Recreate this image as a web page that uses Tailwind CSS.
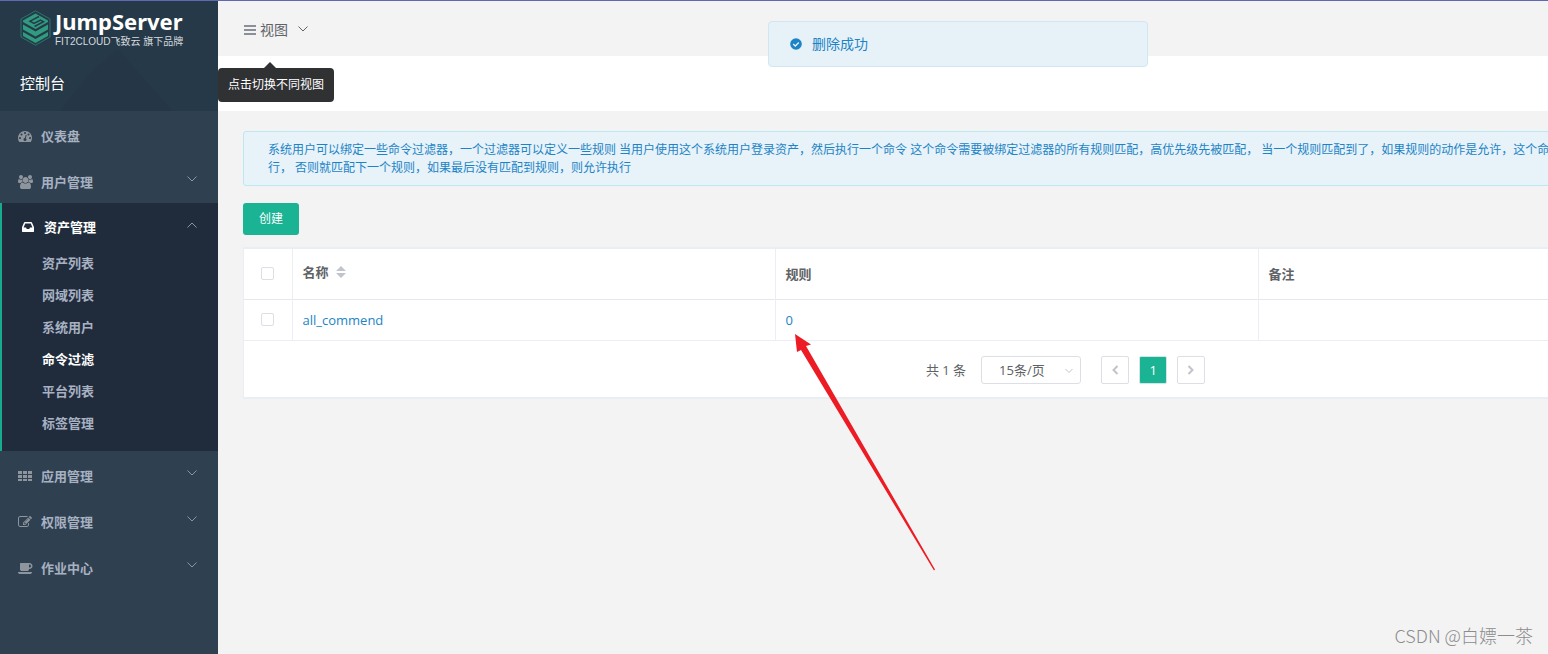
<!DOCTYPE html>
<html lang="zh-CN">
<head>
<meta charset="utf-8">
<title>JumpServer - 命令过滤</title>
<script src="https://cdn.jsdelivr.net/npm/@tailwindcss/browser@4"></script>
</head>
<body class="relative flex min-h-screen overflow-x-hidden border-t border-[#6067b3] bg-[#f3f3f4] font-['Open_Sans','Noto_Sans_CJK_SC',sans-serif] text-[13px] leading-5 text-[#606266]">

<aside class="w-[218px] shrink-0 bg-[#2f4050]">
  <header class="relative h-[110px] overflow-hidden bg-[#263949] text-white">
    <svg class="absolute inset-0 size-full" viewBox="0 0 218 110" aria-hidden="true"><path d="M118 48L172 110H60L90 72Z" fill="#253747"/></svg>
    <a href="#" class="relative flex items-start gap-1 pt-2 pl-5">
      <svg class="mt-px h-9 w-[31px]" viewBox="0 0 31 36" aria-hidden="true">
        <path d="M15.500 .8L30 9V27L15.500 35.200L1 27V9Z" fill="none" stroke="#2a756c" stroke-width="1"/>
        <path d="M15.500 3.500L28 10.500V12L15.500 19L3 12V10.500Z" fill="#2f9c80"/>
        <path d="M19 6.500L10 11.200L14 13.400L20.500 10L23.500 11.700L14.500 16.500" fill="none" stroke="#263949" stroke-width="1.500"/>
        <path d="M3 14.500L15.500 21.500L28 14.500V19.500L15.500 26.500L3 19.500Z" fill="#2f9c80"/>
        <path d="M3 22L15.500 29L28 22V26L15.500 33L3 26Z" fill="#2f9c80"/>
      </svg>
      <span class="block">
        <span class="block font-['Noto_Sans'] text-[22px] leading-6 font-bold">JumpServer</span>
        <span class="mt-px block font-['Liberation_Sans','Noto_Sans_CJK_SC',sans-serif] text-[10px] leading-4 whitespace-nowrap text-[#d5dade]">FIT2CLOUD飞致云 旗下品牌</span>
      </span>
    </a>
    <h1 class="relative mt-[21px] pl-5 text-[15px] leading-6">控制台</h1>
  </header>

  <nav class="font-semibold text-[#a7b1c2]">
    <a href="#" class="flex h-[46px] items-center pt-[3px] pl-[18px]">
      <svg class="mr-[9px] size-3.5 fill-[#8f959d]" viewBox="0 0 1792 1792" aria-hidden="true"><path d="M384 1152q0-53-37.500-90.500t-90.500-37.500-90.500 37.500-37.500 90.500 37.500 90.500 90.500 37.500 90.500-37.500 37.500-90.500zm192-448q0-53-37.500-90.500t-90.500-37.500-90.500 37.500-37.500 90.500 37.500 90.500 90.500 37.500 90.500-37.500 37.500-90.500zm428 481l101-382q6-26-7.500-48.500t-38.500-29.500-48 6.500-30 39.500l-101 382q-60 5-107 43.500t-63 98.500q-20 77 20 146t117 89 146-20 89-117q16-60-6-117t-72-91zm660-33q0-53-37.500-90.500t-90.500-37.500-90.500 37.500-37.500 90.500 37.500 90.500 90.500 37.500 90.500-37.500 37.500-90.500zm-640-640q0-53-37.500-90.500t-90.500-37.500-90.500 37.500-37.500 90.500 37.500 90.500 90.500 37.500 90.500-37.500 37.500-90.500zm448 192q0-53-37.500-90.500t-90.500-37.500-90.500 37.500-37.500 90.500 37.500 90.500 90.500 37.500 90.500-37.500 37.500-90.500zm320 448q0 261-141 483-19 29-54 29h-1402q-35 0-54-29-141-221-141-483 0-182 71-348t191-286 286-191 348-71 348 71 286 191 191 286 71 348z"/></svg>
      仪表盘
    </a>
    <a href="#" class="flex h-[46px] items-center pt-[3px] pr-[21px] pl-[18px]">
      <svg class="mr-2 h-3.5 w-[15px] fill-[#8f959d]" viewBox="0 0 1920 1792" aria-hidden="true"><path d="M593 896q-162 5-265 128h-134q-82 0-138-40.500t-56-118.500q0-353 124-353 6 0 43.500 21t97.500 42.500 119 21.500q67 0 133-23-5 37-5 66 0 139 81 256zm1071 637q0 120-73 189.500t-194 69.500h-874q-121 0-194-69.500t-73-189.500q0-53 3.500-103.500t14-109 26.500-108.500 43-97.500 62-81 85.500-53.500 111.500-20q10 0 43 21.500t73 48 107 48 135 21.500 135-21.500 107-48 73-48 43-21.500q61 0 111.500 20t85.500 53.500 62 81 43 97.500 26.500 108.500 14 109 3.500 103.500zm-1024-1277q0 106-75 181t-181 75-181-75-75-181 75-181 181-75 181 75 75 181zm704 384q0 159-112.500 271.500t-271.500 112.500-271.500-112.500-112.500-271.500 112.500-271.500 271.500-112.500 271.500 112.500 112.500 271.500zm576 225q0 78-56 118.500t-138 40.500h-134q-103-123-265-128 81-117 81-256 0-29-5-66 66 23 133 23 59 0 119-21.500t97.500-42.500 43.500-21q124 0 124 353zm-128-609q0 106-75 181t-181 75-181-75-75-181 75-181 181-75 181 75 75 181z"/></svg>
      用户管理
      <svg class="mb-1.5 ml-auto h-1.5 w-2.5 fill-none stroke-[#8f959d]" viewBox="0 0 10 6" aria-hidden="true"><path d="M.5 .5L5 5L9.500 .5"/></svg>
    </a>

    <section class="border-l-2 border-[#19aa8d] bg-[#202c3c] pb-3">
      <a href="#" class="flex h-11 items-center pt-1 pr-[21px] pl-[19px] text-white">
        <svg class="mr-[9px] size-3.5 fill-white" viewBox="0 0 1792 1792" aria-hidden="true"><path d="M1151 960h316q-1-3-2.500-8.500t-2.500-7.500l-212-496h-708l-212 496q-1 3-2.500 8.500t-2.500 7.500h316l95 192h320zm513 30v482q0 26-19 45t-45 19h-1408q-26 0-45-19t-19-45v-482q0-62 25-123l238-552q10-25 36.500-42t52.500-17h832q26 0 52.500 17t36.500 42l238 552q25 61 25 123z"/></svg>
        资产管理
        <svg class="mb-1 ml-auto h-1.5 w-2.5 fill-none stroke-[#8f959d]" viewBox="0 0 10 6" aria-hidden="true"><path d="M.5 5.500L5 1L9.500 5.500"/></svg>
      </a>
      <ul class="pl-10 leading-8">
        <li><a href="#">资产列表</a></li>
        <li><a href="#">网域列表</a></li>
        <li><a href="#">系统用户</a></li>
        <li><a href="#" class="font-bold text-white" aria-current="page">命令过滤</a></li>
        <li><a href="#">平台列表</a></li>
        <li><a href="#">标签管理</a></li>
      </ul>
    </section>

    <a href="#" class="flex h-[46px] items-center pt-[3px] pr-[21px] pl-[18px]">
      <svg class="mr-[9px] size-3.5 fill-[#8f959d]" viewBox="0 0 14 14" aria-hidden="true"><path d="M0 2h4v3H0zM5 2h4v3H5zM10 2h4v3h-4zM0 6h4v3H0zM5 6h4v3H5zM10 6h4v3h-4zM0 10h4v2H0zM5 10h4v2H5zM10 10h4v2h-4z"/></svg>
      应用管理
      <svg class="mb-1.5 ml-auto h-1.5 w-2.5 fill-none stroke-[#8f959d]" viewBox="0 0 10 6" aria-hidden="true"><path d="M.5 .5L5 5L9.500 .5"/></svg>
    </a>
    <a href="#" class="flex h-[46px] items-center pt-[3px] pr-[21px] pl-[18px]">
      <svg class="mr-[9px] size-3.5 fill-[#8f959d]" viewBox="0 0 1792 1792" aria-hidden="true"><path d="M888 1184l116-116-152-152-116 116v56h96v96h56zm440-720q-16-16-33 1l-350 350q-17 17-1 33t33-1l350-350q17-17 1-33zm80 594v190q0 119-84.500 203.500t-203.500 84.500h-832q-119 0-203.500-84.500t-84.500-203.500v-832q0-119 84.500-203.500t203.500-84.500h832q63 0 117 25 15 7 18 23 3 17-9 29l-49 49q-14 14-32 8-23-6-45-6h-832q-66 0-113 47t-47 113v832q0 66 47 113t113 47h832q66 0 113-47t47-113v-126q0-13 9-22l64-64q15-15 35-7t20 29zm-96-738l288 288-672 672h-288v-288zm444 132l-92 92-288-288 92-92q28-28 68-28t68 28l152 152q28 28 28 68t-28 68z"/></svg>
      权限管理
      <svg class="mb-1.5 ml-auto h-1.5 w-2.5 fill-none stroke-[#8f959d]" viewBox="0 0 10 6" aria-hidden="true"><path d="M.5 .5L5 5L9.500 .5"/></svg>
    </a>
    <a href="#" class="flex h-[46px] items-center pt-[3px] pr-[21px] pl-[18px]">
      <svg class="mr-2 h-3.5 w-[15px] fill-[#8f959d]" viewBox="0 128 1920 1792" aria-hidden="true"><path d="M1664 768q0-80-56-136t-136-56h-64v384h64q80 0 136-56t56-136zm-1664 768h1792q0 106-75 181t-181 75h-1280q-106 0-181-75t-75-181zm1856-768q0 159-112.500 271.500t-271.500 112.500h-64v32q0 92-66 158t-158 66h-704q-92 0-158-66t-66-158v-736q0-26 19-45t45-19h1152q159 0 271.500 112.500t112.500 271.500z"/></svg>
      作业中心
      <svg class="mb-1.5 ml-auto h-1.5 w-2.5 fill-none stroke-[#8f959d]" viewBox="0 0 10 6" aria-hidden="true"><path d="M.5 .5L5 5L9.500 .5"/></svg>
    </a>
  </nav>
</aside>

<main class="min-w-0 flex-1 overflow-hidden">
  <div class="flex h-[55px] items-center pt-[3px] pl-[26px]">
    <button type="button" class="flex items-center text-sm" aria-describedby="view-tip">
      <svg class="mr-1 h-3 w-3" viewBox="0 0 12 12" fill="#8a8f98" aria-hidden="true"><path d="M0 1h12v2H0zM0 5h12v2H0zM0 9h12v2H0z"/></svg>
      视图
      <svg class="mb-0.5 ml-2.5 h-1.5 w-2.5 fill-none stroke-[#606266]" viewBox="0 0 10 6" aria-hidden="true"><path d="M.5 .5L5 5L9.500 .5"/></svg>
    </button>
  </div>
  <div class="h-[55px] bg-white"></div>

  <div class="min-w-[1696px] px-[25px] pt-5">
    <p class="rounded-[3px] border border-[#bce8f1] bg-[#e7f2f9] pt-[9px] pb-2 pl-6 text-xs leading-[18px] whitespace-nowrap text-[#1c84c6]">系统用户可以绑定一些命令过滤器，一个过滤器可以定义一些规则 当用户使用这个系统用户登录资产，然后执行一个命令 这个命令需要被绑定过滤器的所有规则匹配，高优先级先被匹配， 当一个规则匹配到了，如果规则的动作是允许，这个命<br>行， 否则就匹配下一个规则，如果最后没有匹配到规则，则允许执行</p>

    <button type="button" class="mt-[17px] block h-8 rounded-[3px] bg-[#1ab394] px-4 text-xs text-white">创建</button>

    <section class="mt-3 border-2 border-l border-[#e9edf4] bg-white">
      <table class="w-full table-fixed border-collapse text-left">
        <colgroup><col class="w-12"><col class="w-[483px]"><col class="w-[483px]"><col></colgroup>
        <thead>
          <tr class="h-[50px] border-b border-[#e4e7ed]">
            <th class="border-r border-[#ebeef5]"><input type="checkbox" aria-label="全选" class="mx-auto block size-[13px] appearance-none rounded-xs border border-[#dcdfe6] bg-white"></th>
            <th class="border-r border-[#ebeef5] px-2.5 pb-1 font-semibold"><button type="button" class="flex items-center gap-[7px]">名称
              <svg class="h-3 w-2.5" viewBox="0 0 10 12" fill="#c0c4cc" aria-hidden="true"><path d="M0 5L5 0L10 5ZM0 7H10L5 12Z"/></svg></button></th>
            <th class="border-r border-[#ebeef5] px-2.5 font-semibold">规则</th>
            <th class="px-2.5 font-semibold">备注</th>
          </tr>
        </thead>
        <tbody>
          <tr class="h-[41px] border-b border-[#ebeef5]">
            <td class="border-r border-[#ebeef5]"><input type="checkbox" aria-label="选择 all_commend" class="mx-auto block size-[13px] appearance-none rounded-xs border border-[#dcdfe6] bg-white"></td>
            <td class="border-r border-[#ebeef5] px-2.5"><a href="#" class="text-[#1c84c6]">all_commend</a></td>
            <td class="border-r border-[#ebeef5] px-2.5"><a href="#" class="text-[#1c84c6]">0</a></td>
            <td></td>
          </tr>
        </tbody>
      </table>
      <div class="flex items-center justify-center pt-[15px] pb-[13px]">
        <span>共 1 条</span>
        <div class="relative mr-5 ml-[15px]">
          <select aria-label="每页条数" class="block h-7 w-[100px] appearance-none rounded-[3px] border border-[#dcdfe6] bg-white pl-[17px]"><option>15条/页</option></select>
          <svg class="pointer-events-none absolute top-3 right-2 h-1.5 w-2 fill-none stroke-[#c0c4cc]" viewBox="0 0 8 6" aria-hidden="true"><path d="M.5 1L4 4.500L7.500 1"/></svg>
        </div>
        <div class="flex gap-2.5">
          <button type="button" aria-label="上一页" class="flex size-7 items-center justify-center rounded-xs border border-[#dcdfe6]"><svg class="h-2.5 w-1.5 fill-none stroke-[#c0c4cc] stroke-2" viewBox="0 0 6 10" aria-hidden="true"><path d="M5.500 1L1.500 5L5.500 9"/></svg></button>
          <button type="button" aria-current="page" class="size-7 rounded-xs border border-[#d5e5e5] bg-[#1ab394] text-white">1</button>
          <button type="button" aria-label="下一页" class="flex size-7 items-center justify-center rounded-xs border border-[#dcdfe6]"><svg class="h-2.5 w-1.5 fill-none stroke-[#c0c4cc] stroke-2" viewBox="0 0 6 10" aria-hidden="true"><path d="M.5 1L4.500 5L.5 9"/></svg></button>
        </div>
      </div>
    </section>
  </div>
</main>

<!-- Tooltip of the view switch -->
<div id="view-tip" role="tooltip" class="absolute top-[67px] left-[218px] rounded-sm bg-[#303133] px-2.5 py-[7px] text-xs leading-5 text-white">
  <svg class="absolute -top-1.5 left-[46px] h-1.5 w-3" viewBox="0 0 12 6" fill="#303133" aria-hidden="true"><path d="M0 6L6 0L12 6Z"/></svg>
  点击切换不同视图
</div>

<!-- Success message -->
<div role="status" class="absolute top-5 left-[768px] flex h-[46px] w-[380px] items-center rounded-sm border border-[#d1e6f4] bg-[#e7f1f8] pl-[21px] text-sm text-[#1c84c6]">
  <svg class="mr-2.5 size-3" viewBox="0 0 12 12" aria-hidden="true"><circle cx="6" cy="6" r="5.800" fill="#1c84c6"/><path d="M3.200 6L5.300 8L8.800 4.500" fill="none" stroke="#e7f1f8" stroke-width="1.300"/></svg>
  删除成功
</div>

<!-- Annotation arrow -->
<svg class="pointer-events-none absolute top-[332px] left-[794px] h-[238px] w-[142px]" viewBox="0 0 142 238" fill="#ed1c24" aria-hidden="true"><path d="M1 1L17 11.500L12 13L141 236.500L140 237.500L7 17L3 19Z"/></svg>

<p class="absolute right-[15px] bottom-[9px] font-['Noto_Sans_CJK_SC',sans-serif] text-lg leading-5 font-light text-[#8c8c8c]">CSDN @白嫖一茶</p>
</body>
</html>
